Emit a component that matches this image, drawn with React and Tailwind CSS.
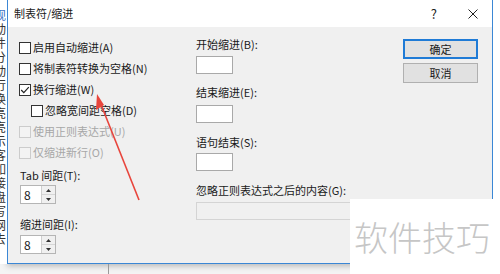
import React from 'react';

const font = { fontFamily: '"Noto Sans CJK SC", "Liberation Sans", sans-serif' };

// 左端に少しだけ見える文書の文字
const sideChars = ['观', '动', '件', '分', '动', '行', '换', '亮', '亮', '示', '客', '如', '接', '盘', '写', '网', '去'];

function CheckBox({ label, checked, disabled, indent }) {
  return (
    <div className={`flex h-[21px] items-center ${indent ? 'pl-[12px]' : ''}`}>
      <span
        className={`flex h-[12px] w-[12px] items-center justify-center border ${
          disabled ? 'border-[#cccccc] bg-[#f3f3f3]' : 'border-[#333333] bg-white'
        }`}
      >
        {checked && (
          <svg width="10" height="10" viewBox="0 0 10 10">
            <path d="M1.2 5 L3.8 7.6 L8.8 2.2" fill="none" stroke="#222" strokeWidth="1.2" />
          </svg>
        )}
      </span>
      <span className={`ml-[2px] text-[11px] leading-none ${disabled ? 'text-[#a7a7a7]' : 'text-[#1a1a1a]'}`}>
        {label}
      </span>
    </div>
  );
}

function Spinner() {
  return (
    <div className="flex h-[19px] w-[36px] border border-[#b5b5b5] bg-white">
      <div className="flex flex-1 items-center pl-[3px] text-[12px] leading-none text-[#1a1a1a]">8</div>
      <div className="flex w-[14px] flex-col border-l border-[#cfcfcf] bg-[#f0f0f0]">
        <div className="flex flex-1 items-center justify-center border-b border-[#d6d6d6]">
          <svg width="5" height="3" viewBox="0 0 5 3"><path d="M0 3 L2.5 0 L5 3 Z" fill="#333" /></svg>
        </div>
        <div className="flex flex-1 items-center justify-center">
          <svg width="5" height="3" viewBox="0 0 5 3"><path d="M0 0 L2.5 3 L5 0 Z" fill="#333" /></svg>
        </div>
      </div>
    </div>
  );
}

function Label({ children, className = '' }) {
  return <div className={`flex h-[16px] items-center text-[11px] leading-none text-[#1a1a1a] ${className}`}>{children}</div>;
}

function SmallBox({ className = '' }) {
  return <div className={`h-[18px] w-[37px] border border-[#a9a9a9] bg-white ${className}`} />;
}

export default function App() {
  return (
    <div className="relative h-[274px] w-[500px] overflow-hidden bg-[#f4f4f4]" style={font}>
      <div className="flex h-[264px]">
        {/* 背景の文書 */}
        <div className="relative w-[7px] overflow-hidden bg-white">
          <div className="absolute left-[-6px] top-[8px] flex flex-col">
            {sideChars.map((c, i) => (
              <div
                key={i}
                className={`h-[14px] overflow-hidden text-[12px] leading-[14px] ${i === 0 ? 'text-[#3b6fc4]' : 'text-[#333]'}`}
              >
                {c}
              </div>
            ))}
          </div>
        </div>

        {/* ダイアログ */}
        <div className="flex w-[486px] flex-col border-x border-b border-[#3b87d5] bg-[#f0f0f0] shadow-[0_2px_6px_rgba(0,0,0,0.25)]">
          <div className="flex h-[27px] items-center bg-white pl-[6px] pr-[14px]">
            <span className="text-[11px] leading-none text-[#1a1a1a]">制表符/缩进</span>
            <span className="ml-auto text-[13px] leading-none text-[#222]">?</span>
            <span className="ml-[31px] flex items-center">
              <svg width="10" height="10" viewBox="0 0 10 10">
                <path d="M0.5 0.5 L9.5 9.5 M9.5 0.5 L0.5 9.5" stroke="#222" strokeWidth="1" />
              </svg>
            </span>
          </div>

          <div className="flex flex-1">
            {/* 左列 */}
            <div className="flex w-[188px] flex-col pl-[11px] pt-[10px]">
              <CheckBox label="启用自动缩进(A)" />
              <CheckBox label="将制表符转换为空格(N)" />
              <CheckBox label="换行缩进(W)" checked />
              <CheckBox label="忽略宽间距空格(D)" indent />
              <CheckBox label="使用正则表达式(U)" disabled />
              <CheckBox label="仅缩进新行(O)" disabled />
              <Label className="mt-[4px] pl-px">Tab 间距(T):</Label>
              <div className="mt-[2px] pl-px"><Spinner /></div>
              <Label className="mt-[12px] pl-px">缩进间距(I):</Label>
              <div className="mt-[3px] pl-px"><Spinner /></div>
            </div>

            {/* 右列 */}
            <div className="flex flex-1 flex-col pt-[9px]">
              <div className="flex">
                <div className="flex w-[207px] flex-col">
                  <Label>开始缩进(B):</Label>
                  <SmallBox className="mt-[4px]" />
                  <Label className="mt-[10px]">结束缩进(E):</Label>
                  <SmallBox className="mt-[5px]" />
                  <Label className="mt-[11px]">语句结束(S):</Label>
                  <SmallBox className="mt-[3px]" />
                </div>
                <div className="flex flex-col pt-[3px]">
                  <button className="h-[20px] w-[75px] border-2 border-[#1f7bd6] bg-[#e1e1e1] text-[11px] leading-none text-[#1a1a1a]">
                    确定
                  </button>
                  <button className="mt-[4px] h-[20px] w-[75px] border border-[#b0b0b0] bg-[#e1e1e1] text-[11px] leading-none text-[#1a1a1a]">
                    取消
                  </button>
                </div>
              </div>
              <Label className="mt-[11px]">忽略正则表达式之后的内容(G):</Label>
              <div className="mt-[4px] h-[18px] w-[282px] border border-[#d4d4d4] bg-[#f0f0f0]" />
            </div>
          </div>
        </div>
        <div className="flex-1 bg-white" />
      </div>

      {/* 下の背景 */}
      <div className="flex h-[10px]">
        <div className="w-[108px]" />
        <div className="w-px bg-[#9a9a9a]" />
      </div>

      {/* 赤い矢印 */}
      <svg className="absolute left-0 top-0" width="500" height="274" viewBox="0 0 500 274">
        <line x1="139" y1="200" x2="100" y2="102" stroke="#e8453c" strokeWidth="1.6" />
        <path d="M97 94 L96 110 L104 105 Z" fill="#e8453c" />
      </svg>

      {/* ウォーターマーク */}
      <div className="absolute left-[350px] top-[199px] flex h-[75px] w-[150px] items-center bg-white pl-[4px]">
        <span className="text-[34px] font-light leading-none text-[#c6c6c6]">软件技巧</span>
      </div>
    </div>
  );
}
